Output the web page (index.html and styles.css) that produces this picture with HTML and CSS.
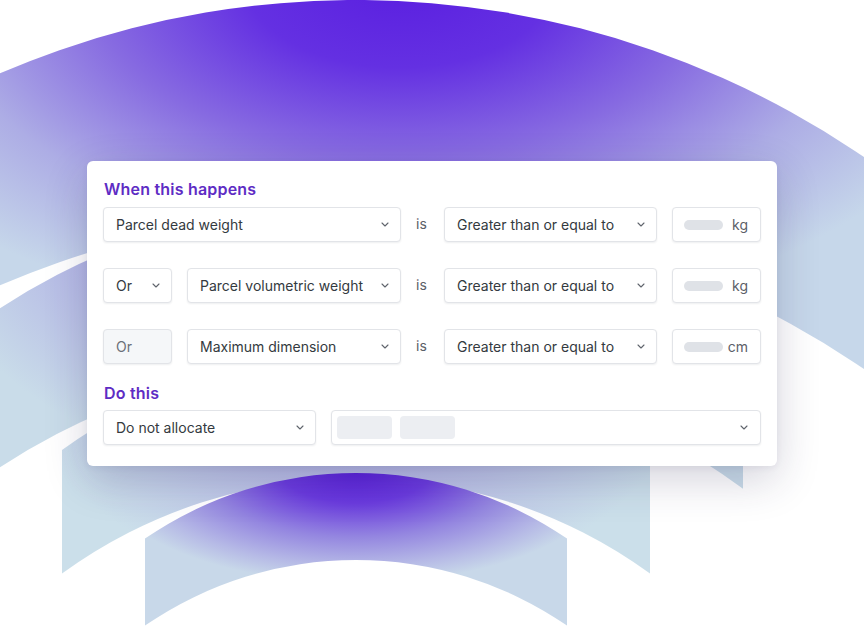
FILE: index.html
```html
<!DOCTYPE html>
<html lang="en">
<head>
  <meta charset="UTF-8">
  <meta name="viewport" content="width=device-width, initial-scale=1.0">
  <title>Allocation rule</title>
  <link rel="stylesheet" href="styles.css">
</head>
<body>

<div class="scene">
  <!-- arches behind the card -->
  <svg class="arches" width="864" height="628" viewBox="0 0 864 628" aria-hidden="true">
    <defs>
      <radialGradient id="grad-a" gradientUnits="userSpaceOnUse" cx="0" cy="0" r="1" gradientTransform="translate(400 -20) scale(620 350)">
        <stop offset="0" stop-color="#5a1ee0"/>
        <stop offset="0.25" stop-color="#6430e2"/>
        <stop offset="0.5" stop-color="#876be1"/>
        <stop offset="0.75" stop-color="#adade5"/>
        <stop offset="1" stop-color="#c6d7ea"/>
      </radialGradient>
      <radialGradient id="grad-b" gradientUnits="userSpaceOnUse" cx="0" cy="0" r="1" gradientTransform="translate(356 200) scale(440 290)">
        <stop offset="0" stop-color="#8a74e0"/>
        <stop offset="0.55" stop-color="#adabe4"/>
        <stop offset="1" stop-color="#c9dce9"/>
      </radialGradient>
      <radialGradient id="grad-c" gradientUnits="userSpaceOnUse" cx="0" cy="0" r="1" gradientTransform="translate(356 360) scale(340 230)">
        <stop offset="0" stop-color="#a29ce0"/>
        <stop offset="0.55" stop-color="#b9bee6"/>
        <stop offset="1" stop-color="#cbdfea"/>
      </radialGradient>
      <radialGradient id="grad-d" gradientUnits="userSpaceOnUse" cx="0" cy="0" r="1" gradientTransform="translate(356 468) scale(260 115)">
        <stop offset="0" stop-color="#581ed8"/>
        <stop offset="0.3" stop-color="#6a3ade"/>
        <stop offset="0.6" stop-color="#9486e0"/>
        <stop offset="0.85" stop-color="#b6bae6"/>
        <stop offset="1" stop-color="#c8d8e9"/>
      </radialGradient>
    </defs>
    <path d="M-204 195.4 A900 900 0 0 1 916 195.4 L916 407.4 A900 900 0 0 0 -204 407.4 Z" fill="url(#grad-a)"/>
    <path d="M-31 329.8 A650 650 0 0 1 743 329.8 L743 488.8 A650 650 0 0 0 -31 488.8 Z" fill="url(#grad-b)"/>
    <path d="M62 450 A500 500 0 0 1 650 450 L650 573.6 A500 500 0 0 0 62 573.6 Z" fill="url(#grad-c)"/>
    <path d="M145 538.6 A372 372 0 0 1 567 538.6 L567 625.6 A372 372 0 0 0 145 625.6 Z" fill="url(#grad-d)"/>
  </svg>

  <div class="card">
    <h2 class="card-title">When this happens</h2>

    <div class="rule-grid">
      <div class="field field-wide">
        <span>Parcel dead weight</span>
        <svg class="chevron" width="8" height="5" viewBox="0 0 8 5"><path d="M1 1l3 3 3-3"/></svg>
      </div>
      <span class="is">is</span>
      <div class="field">
        <span>Greater than or equal to</span>
        <svg class="chevron" width="8" height="5" viewBox="0 0 8 5"><path d="M1 1l3 3 3-3"/></svg>
      </div>
      <div class="field unit">
        <span class="pill"></span>
        <span>kg</span>
      </div>

      <div class="field">
        <span>Or</span>
        <svg class="chevron" width="8" height="5" viewBox="0 0 8 5"><path d="M1 1l3 3 3-3"/></svg>
      </div>
      <div class="field">
        <span>Parcel volumetric weight</span>
        <svg class="chevron" width="8" height="5" viewBox="0 0 8 5"><path d="M1 1l3 3 3-3"/></svg>
      </div>
      <span class="is">is</span>
      <div class="field">
        <span>Greater than or equal to</span>
        <svg class="chevron" width="8" height="5" viewBox="0 0 8 5"><path d="M1 1l3 3 3-3"/></svg>
      </div>
      <div class="field unit">
        <span class="pill"></span>
        <span>kg</span>
      </div>

      <div class="field disabled">
        <span>Or</span>
      </div>
      <div class="field">
        <span>Maximum dimension</span>
        <svg class="chevron" width="8" height="5" viewBox="0 0 8 5"><path d="M1 1l3 3 3-3"/></svg>
      </div>
      <span class="is">is</span>
      <div class="field">
        <span>Greater than or equal to</span>
        <svg class="chevron" width="8" height="5" viewBox="0 0 8 5"><path d="M1 1l3 3 3-3"/></svg>
      </div>
      <div class="field unit">
        <span class="pill"></span>
        <span>cm</span>
      </div>
    </div>

    <h2 class="card-title do-title">Do this</h2>

    <div class="action-row">
      <div class="field action">
        <span>Do not allocate</span>
        <svg class="chevron" width="8" height="5" viewBox="0 0 8 5"><path d="M1 1l3 3 3-3"/></svg>
      </div>
      <div class="field targets">
        <div class="chips">
          <span class="chip"></span>
          <span class="chip"></span>
        </div>
        <svg class="chevron" width="8" height="5" viewBox="0 0 8 5"><path d="M1 1l3 3 3-3"/></svg>
      </div>
    </div>
  </div>
</div>

</body>
</html>
```

FILE: styles.css
```css
:root {
  --purple: #5e2cc4;
  --text-main: #343a40;
  --text-muted: #5b6068;
  --border-color: #e2e4e8;
  --pill-color: #dfe2e7;
}

* {
  box-sizing: border-box;
  margin: 0;
  padding: 0;
}

body {
  font-family: 'Inter', 'Liberation Sans', sans-serif;
  background-color: #ffffff;
  color: var(--text-main);
  overflow: hidden;
}

/* the whole picture */
.scene {
  position: relative;
  width: 864px;
  height: 628px;
  padding: 161px 0 0 87px;
}

.arches {
  position: absolute;
  top: 0;
  left: 0;
}

.card {
  position: relative; /* stays above the arches */
  width: 690px;
  height: 305px;
  background-color: #ffffff;
  border-radius: 6px;
  padding: 18px 16px 0 16px;
  box-shadow: 0 14px 44px rgba(40, 36, 80, 0.2), 0 2px 6px rgba(40, 36, 80, 0.06);
}

.card-title {
  font-size: 16px;
  line-height: 20px;
  font-weight: 600;
  letter-spacing: 0.2px;
  color: var(--purple);
  margin-bottom: 8px;
  padding-left: 1px;
}

.do-title {
  margin-top: 19px;
  margin-bottom: 7px;
}

/* conditions: Or | field | is | operator | value */
.rule-grid {
  display: grid;
  grid-template-columns: 69px 214px 13px 213px 89px;
  grid-auto-rows: 35px;
  column-gap: 15px;
  row-gap: 26px;
}

.field {
  display: flex;
  align-items: center;
  justify-content: space-between;
  padding: 0 11px 0 12px;
  background-color: #ffffff;
  border: 1px solid var(--border-color);
  border-radius: 4px;
  box-shadow: 0 1px 2px rgba(16, 24, 40, 0.07);
  font-size: 14px;
  white-space: nowrap;
}

.field-wide {
  grid-column: 1 / span 2;
}

.chevron {
  flex-shrink: 0;
  fill: none;
  stroke: #5f646c;
  stroke-width: 1.1;
  stroke-linecap: round;
  stroke-linejoin: round;
}

.is {
  align-self: center;
  padding-bottom: 3px;
  font-size: 14px;
  color: var(--text-muted);
}

.disabled {
  background-color: #f5f7f9;
  color: #6b7078;
}

.unit {
  padding: 0 12px 0 11px;
  color: var(--text-muted);
}

.pill {
  width: 39px;
  height: 10px;
  border-radius: 5px;
  background-color: var(--pill-color);
}

/* action */
.action-row {
  display: flex;
  gap: 15px;
  height: 35px;
}

.action {
  width: 213px;
}

.targets {
  flex: 1;
  padding-left: 5px;
  padding-right: 12px;
}

.chips {
  display: flex;
  gap: 8px;
}

.chip {
  width: 55px;
  height: 23px;
  border-radius: 4px;
  background-color: #eceef2;
}
```
